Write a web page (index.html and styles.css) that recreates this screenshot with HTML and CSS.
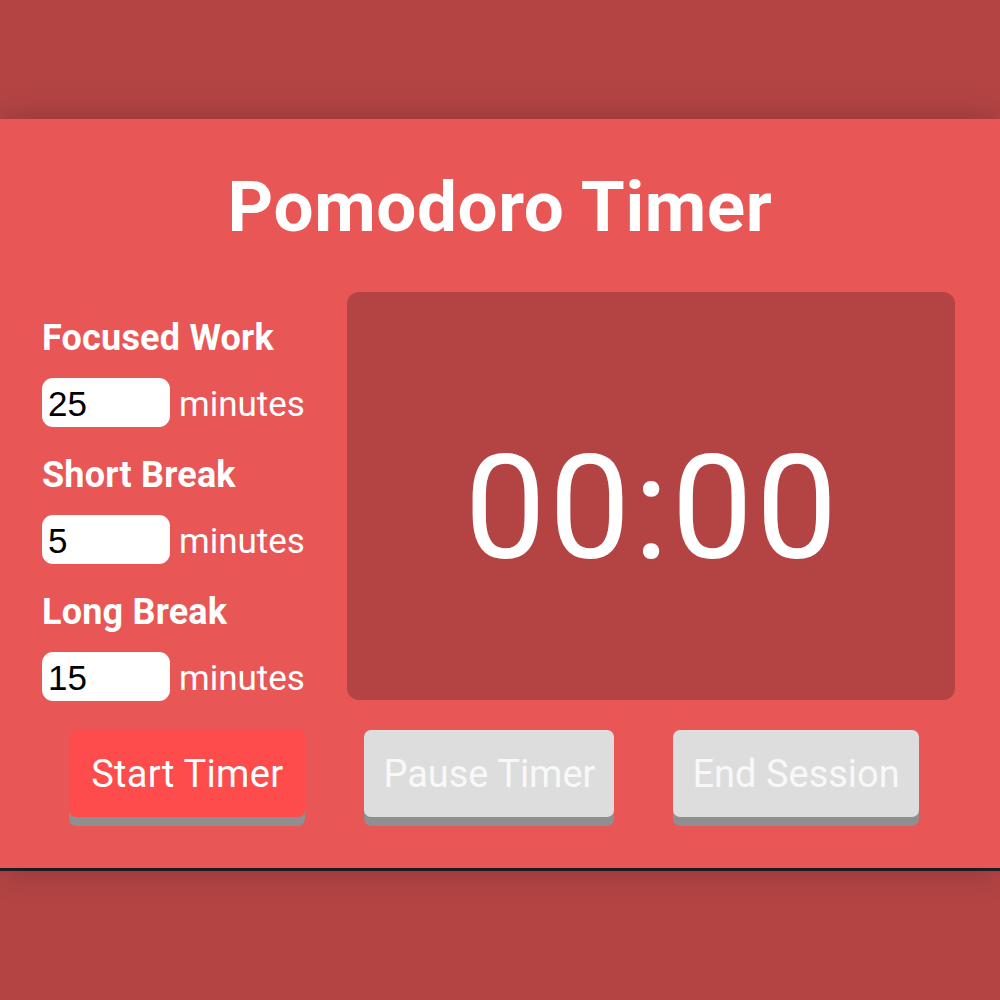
FILE: index.html
```html
<!DOCTYPE html>
<html lang="en">
<head>
<meta charset="utf-8">
<title>Pomodoro Timer</title>
<link rel="stylesheet" href="styles.css">
</head>
<body>
<main class="panel">
  <h1 class="title">Pomodoro Timer</h1>
  <div class="content">
    <div class="settings">
      <div class="group">
        <label class="label" for="work">Focused Work</label>
        <div class="field">
          <input class="num" id="work" type="text" value="25">
          <span class="unit">minutes</span>
        </div>
      </div>
      <div class="group">
        <label class="label" for="short">Short Break</label>
        <div class="field">
          <input class="num" id="short" type="text" value="5">
          <span class="unit">minutes</span>
        </div>
      </div>
      <div class="group">
        <label class="label" for="long">Long Break</label>
        <div class="field">
          <input class="num" id="long" type="text" value="15">
          <span class="unit">minutes</span>
        </div>
      </div>
    </div>
    <div class="clock"><span class="time">00:00</span></div>
  </div>
  <div class="actions">
    <button class="btn btn-start">Start Timer</button>
    <button class="btn btn-muted">Pause Timer</button>
    <button class="btn btn-muted">End Session</button>
  </div>
</main>
</body>
</html>
```
FILE: styles.css
```css
html, body {
  margin: 0;
  padding: 0;
}
body {
  background: #b44444;
  font-family: Roboto, "Liberation Sans", sans-serif;
  color: #ffffff;
  height: 1000px;
  overflow: hidden;
}
.panel {
  margin-top: 119px;
  height: 749px;
  background: #e85656;
  border-bottom: 3px solid #1d1d21;
  box-shadow: 0 0 32px rgba(0, 0, 0, 0.2);
  box-sizing: content-box;
  display: flex;
  flex-direction: column;
}
.title {
  margin: 0;
  padding-top: 52px;
  font-size: 71px;
  line-height: 1;
  font-weight: 700;
  text-align: center;
  letter-spacing: 0.6px;
}
.content {
  display: flex;
  margin-top: 50px;
  padding-left: 42px;
}
.settings {
  width: 305px;
  display: flex;
  flex-direction: column;
}
.group {
  display: flex;
  flex-direction: column;
  margin-top: 28px;
}
.group + .group {
  margin-top: 30px;
}
.label {
  font-size: 36px;
  font-weight: 700;
  line-height: 36px;
  margin-bottom: 22px;
  letter-spacing: 0.2px;
}
.field {
  display: flex;
  align-items: center;
  height: 49px;
}
.num {
  width: 128px;
  height: 49px;
  box-sizing: border-box;
  border: none;
  border-radius: 11px;
  background: #ffffff;
  padding: 2px 0 0 6px;
  font-family: "Liberation Sans", Arial, sans-serif;
  font-size: 35px;
  color: #000000;
  outline: none;
}
.unit {
  margin-left: 9px;
  font-size: 35px;
  line-height: 1;
  padding-top: 4px;
}
.clock {
  width: 608px;
  height: 408px;
  background: #b44343;
  border-radius: 12px;
  display: flex;
  align-items: center;
  justify-content: center;
  box-sizing: border-box;
  padding-top: 24px;
}
.time {
  font-size: 145px;
  line-height: 1;
  font-weight: 400;
  letter-spacing: 3px;
  padding-left: 3px;
}
.actions {
  display: flex;
  justify-content: center;
  gap: 59px;
  margin-top: 29px;
  padding-right: 12px;
}
.btn {
  height: 87px;
  padding: 0 19px;
  border: none;
  border-radius: 7px;
  font-family: Roboto, "Liberation Sans", sans-serif;
  font-size: 38px;
  color: #ffffff;
  box-shadow: 0 9px 0 #8f8f8f;
}
.btn-start {
  background: #fe4b4b;
  padding: 0 22px;
  letter-spacing: 0.3px;
}
.btn-muted {
  background: #dddddd;
  color: #f8f8f8;
}
```
